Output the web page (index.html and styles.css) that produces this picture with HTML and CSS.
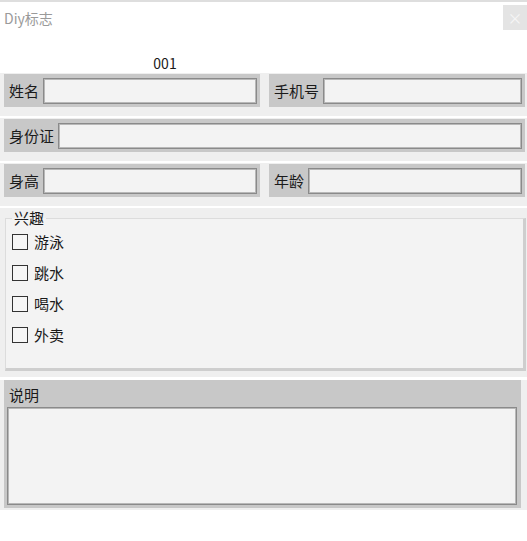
FILE: index.html
```html
<!DOCTYPE html>
<html lang="zh-CN">
<head>
  <meta charset="UTF-8" />
  <meta name="viewport" content="width=device-width, initial-scale=1" />
  <title>Diy标志</title>
  <link rel="stylesheet" href="styles.css">
</head>
<body>

  <div class="topline"></div>

  <div class="titlebar">
    <span class="title">Diy标志</span>
    <span class="close">×</span>
  </div>

  <div class="serial">001</div>

  <div class="row">
    <div class="field">
      <label>姓名</label>
      <input type="text" />
    </div>
    <div class="field">
      <label>手机号</label>
      <input type="text" />
    </div>
  </div>

  <div class="row">
    <div class="field">
      <label>身份证</label>
      <input type="text" />
    </div>
  </div>

  <div class="row">
    <div class="field">
      <label>身高</label>
      <input type="text" />
    </div>
    <div class="field">
      <label>年龄</label>
      <input type="text" />
    </div>
  </div>

  <div class="group">
    <fieldset>
      <legend>兴趣</legend>
      <label class="check"><input type="checkbox" /> 游泳</label>
      <label class="check"><input type="checkbox" /> 跳水</label>
      <label class="check"><input type="checkbox" /> 喝水</label>
      <label class="check"><input type="checkbox" /> 外卖</label>
    </fieldset>
  </div>

  <div class="note">
    <div class="note-box">
      <div class="note-title">说明</div>
      <textarea></textarea>
    </div>
  </div>

</body>
</html>
```

FILE: styles.css
```css
body {
  margin: 0;
  background: #fff;
  color: #1a1a1a;
  font-family: "Noto Sans CJK SC", "Noto Sans", sans-serif;
  font-size: 15px;
}
.topline {
  height: 2px;
  background: #dedede;
}
.titlebar {
  display: flex;
  justify-content: space-between;
  align-items: flex-start;
  height: 32px;
}
.title {
  margin: 7px 0 0 4px;
  font-size: 14px;
  line-height: 18px;
  color: #9a9a9a;
}
.close {
  width: 24px;
  height: 25px;
  margin-top: 3px;
  background: #e4e4e4;
  color: #f6f6f6;
  font-size: 15px;
  line-height: 25px;
  text-align: center;
}
.serial {
  width: 330px;
  height: 20px;
  margin-top: 19px;
  line-height: 20px;
  font-size: 14px;
  text-align: center;
}
.row {
  display: flex;
  gap: 9px;
  padding: 1px 2px 9px 4px;
  margin-bottom: 2px;
  background: #efefef;
}
.field {
  flex: 1;
  display: flex;
  align-items: center;
  gap: 4px;
  height: 33px;
  padding: 0 3px 0 5px;
  background: #c8c8c8;
}
.field label {
  white-space: nowrap;
  line-height: 20px;
}
.field input,
textarea {
  flex: 1;
  min-width: 0;
  height: 26px;
  box-sizing: border-box;
  margin: 0;
  border: 1px solid #8a8a8a;
  box-shadow: inset 0 0 0 1px #b8b8b8;
  background: #f3f3f3;
  outline: none;
}
.group {
  padding: 0 1px 6px 5px;
  margin-bottom: 3px;
  background: #efefef;
}
fieldset {
  margin: 0;
  padding: 0 6px 18px 6px;
  border: 1px solid #dcdcdc;
  border-right: 3px solid #cecece;
  border-bottom: 3px solid #cecece;
  background: #f3f3f3;
}
legend {
  margin-left: 0;
  padding: 0 2px;
  line-height: 20px;
}
.check {
  display: flex;
  align-items: center;
  gap: 6px;
  height: 31px;
}
.check:first-of-type {
  margin-top: -2px;
}
.check input {
  appearance: none;
  box-sizing: border-box;
  width: 16px;
  height: 16px;
  margin: 0;
  border: 1px solid #333;
  background: #f6f6f6;
}
.note {
  padding: 0 6px 2px 4px;
  background: #efefef;
}
.note-box {
  display: flex;
  flex-direction: column;
  padding: 0 4px 3px 3px;
  background: #c8c8c8;
}
.note-title {
  height: 27px;
  padding-left: 2px;
  line-height: 30px;
}
.note-box textarea {
  height: 98px;
  flex: none;
  resize: none;
}
```
